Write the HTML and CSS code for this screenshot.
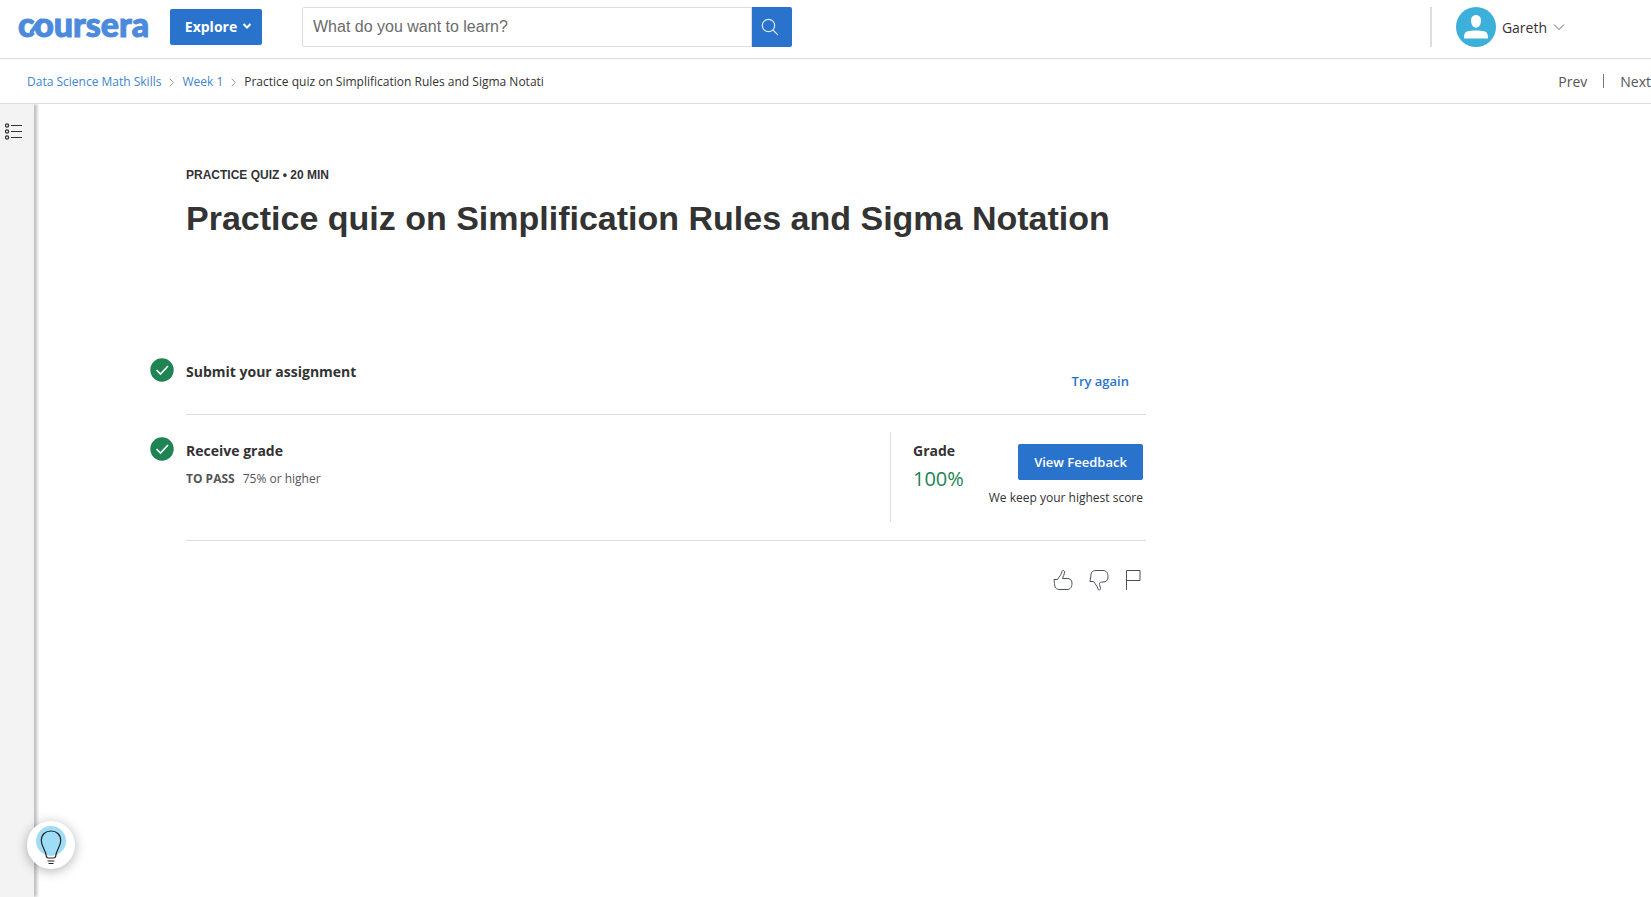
FILE: index.html
```
<!DOCTYPE html>
<html lang="en">
<head>
<meta charset="utf-8">
<meta name="viewport" content="width=device-width, initial-scale=1">
<title>Practice quiz on Simplification Rules and Sigma Notation | Coursera</title>
<link rel="stylesheet" href="styles.css">
</head>
<body>
<header class="topbar">
  <a class="logo" href="#">coursera
    <svg class="logo-link" width="12" height="18" viewBox="0 0 12 18" fill="none" stroke="currentColor" stroke-width="4" aria-hidden="true"><path d="M0 15.500C4.500 14 6 5 12 3"/></svg>
  </a>
  <button class="explore" type="button">Explore
    <svg width="10" height="8" viewBox="0 0 10 8" fill="none" stroke="currentColor" stroke-width="2" aria-hidden="true"><path d="M1.500 2 5 5.500 8.500 2"/></svg>
  </button>
  <form class="search" role="search">
    <input class="search-input" type="text" placeholder="What do you want to learn?" aria-label="What do you want to learn?">
    <button class="search-button" type="button" aria-label="Search">
      <svg width="18" height="18" viewBox="0 0 18 18" fill="none" stroke="currentColor" stroke-width="1.200" aria-hidden="true"><circle cx="7.500" cy="7.500" r="6.200"/><path d="M12 12l4.800 4.800"/></svg>
    </button>
  </form>
  <button class="account" type="button">
    <svg class="avatar" width="40" height="40" viewBox="0 0 40 40" aria-hidden="true"><circle cx="20" cy="20" r="20" fill="#3dafdb"/><path d="M20 8c3 0 5 2.200 5 5.600 0 3.800-2.100 7.200-5 7.200s-5-3.400-5-7.200C15 10.200 17 8 20 8z" fill="#fff"/><path d="M8 31.500c0-5 1-6.500 4-7.200 2.500-.6 4-.8 8-.8s5.500.2 8 .8c3 .7 4 2.200 4 7.200z" fill="#fff"/></svg>
    <span>Gareth</span>
    <svg width="12" height="8" viewBox="0 0 12 8" fill="none" stroke="#666" aria-hidden="true"><path d="M1 1.500l5 5 5-5"/></svg>
  </button>
</header>
<div class="subbar">
  <nav class="crumbs" aria-label="Breadcrumb">
    <a href="#">Data Science Math Skills</a>
    <svg width="5" height="9" viewBox="0 0 5 9" fill="none" stroke="#999" aria-hidden="true"><path d="M.7.700l3.600 3.800L.7 8.300"/></svg>
    <a href="#">Week 1</a>
    <svg width="5" height="9" viewBox="0 0 5 9" fill="none" stroke="#999" aria-hidden="true"><path d="M.7.700l3.600 3.800L.7 8.300"/></svg>
    <span>Practice quiz on Simplification Rules and Sigma Notati</span>
  </nav>
  <nav class="pager" aria-label="Items">
    <a href="#">Prev</a><span class="pager-line"></span><a href="#">Next</a>
  </nav>
</div>
<div class="workspace">
  <aside class="rail">
    <button class="icon-button" type="button" aria-label="Show course outline">
      <svg width="18" height="17" viewBox="0 0 18 17" fill="none" stroke="#333" aria-hidden="true"><g stroke-width="1.300"><circle cx="2" cy="2.500" r="1.600"/><circle cx="2" cy="8.500" r="1.600"/><circle cx="2" cy="14.500" r="1.600"/></g><path d="M6 2.500h11M6 8.500h11M6 14.500h11"/></svg>
    </button>
  </aside>
  <main class="content">
    <p class="eyebrow">PRACTICE QUIZ • 20 MIN</p>
    <h1 class="title">Practice quiz on Simplification Rules and Sigma Notation</h1>
    <section class="step step-submit">
      <svg class="check" width="24" height="24" viewBox="0 0 24 24" fill="none" aria-hidden="true"><circle cx="12" cy="12" r="11.700" fill="#1f8354"/><path d="M6.500 12l4 4 7.500-8" stroke="#fff" stroke-width="1.600"/></svg>
      <h2 class="step-title">Submit your assignment</h2>
      <button class="try-again" type="button">Try again</button>
    </section>
    <section class="step step-grade">
      <svg class="check" width="24" height="24" viewBox="0 0 24 24" fill="none" aria-hidden="true"><circle cx="12" cy="12" r="11.700" fill="#1f8354"/><path d="M6.500 12l4 4 7.500-8" stroke="#fff" stroke-width="1.600"/></svg>
      <div class="receive">
        <h2 class="step-title">Receive grade</h2>
        <p class="pass"><span class="pass-label">TO PASS</span><span>75% or higher</span></p>
      </div>
      <div class="result">
        <div class="grade">
          <h2 class="step-title">Grade</h2>
          <p class="score">100%</p>
        </div>
        <div class="feedback">
          <button class="view-feedback" type="button">View Feedback</button>
          <p class="keep">We keep your highest score</p>
        </div>
      </div>
    </section>
    <div class="reactions">
      <button class="icon-button" type="button" aria-label="Like">
        <svg width="20" height="22" viewBox="0 0 20 22" fill="none" stroke="#4a4f5a" aria-hidden="true"><path d="M1 10.500h3.500C6 7.500 8.500 6 9 2.500c.2-1.500 2.500-1.500 2.500.5 0 2.500-1.500 4.500-2 6.500h4.500c3 0 5 1.500 5 4.500 0 4-1.500 6.500-5 6.500H7c-4 0-5.500-2-5.500-6 0-1.500-.5-3-.5-4z"/></svg>
      </button>
      <button class="icon-button" type="button" aria-label="Dislike">
        <svg width="20" height="22" viewBox="0 0 20 22" fill="none" stroke="#4a4f5a" aria-hidden="true"><path d="M1 12.500h3.500c1.500 2.500 4 4.500 4.500 7.500.5 1.500 2.500 1.200 2.500-.5 0-2-1.500-3.500-1-5 .2-1.200 1.500-1.500 3.500-1.500 3 0 5-1.500 5-5 0-4-1.500-6.500-5-6.500H7C3 1.500 2 3.500 1.800 7.500 1.700 9 1 11 1 12.500z"/></svg>
      </button>
      <button class="icon-button" type="button" aria-label="Report a problem">
        <svg width="16" height="22" viewBox="0 0 16 22" fill="none" stroke="#4a4f5a" aria-hidden="true"><path d="M1.500 21V1.500h13.500v10H1.500"/></svg>
      </button>
    </div>
  </main>
</div>
<button class="help" type="button" aria-label="Help">
  <svg width="30" height="42" viewBox="0 0 30 42" fill="none" stroke="#222" aria-hidden="true"><circle cx="15" cy="17" r="15" fill="#9fddf6" stroke="none"/><path d="M10.500 33c-.8-8-5.200-10-5.200-16.500C5.300 10.500 9.500 7 15 7s9.700 3.500 9.700 9.500C24.700 23 20.300 25 19.500 33M10.500 32q0 2 1.500 2h6q1.500 0 1.500-2M11.500 37h7M12.500 39.500h5" stroke-width="1.200"/></svg>
</button>
</body>
</html>
```
FILE: styles.css
```
* { box-sizing: border-box; }
html, body { height: 100%; }
body {
  margin: 0;
  display: flex;
  flex-direction: column;
  overflow: hidden;
  background: #fff;
  color: #333;
  font-family: "Open Sans", sans-serif;
  font-size: 12px;
}
h1, h2, p { margin: 0; }
a { text-decoration: none; }
button { margin: 0; padding: 0; border: 0; background: none; font-family: inherit; color: inherit; cursor: pointer; }
svg { display: block; flex: none; }

.topbar {
  display: flex;
  align-items: flex-start;
  flex: none;
  height: 59px;
  padding: 7px 86px 0 18px;
  border-bottom: 1px solid #ddd;
}
.logo {
  position: relative;
  width: 128px;
  font-family: Lato, sans-serif;
  font-weight: 900;
  font-size: 34px;
  line-height: 34px;
  color: #4b8add;
  -webkit-text-stroke: 1px #4b8add;
}
.logo-link { position: absolute; left: 12px; top: 10px; }
.explore {
  display: flex;
  align-items: center;
  justify-content: center;
  gap: 5px;
  width: 92px;
  height: 36px;
  margin: 2px 40px 0 24px;
  padding: 0 0 2px 5px;
  border-radius: 2px;
  background: #2a73cc;
  color: #fff;
  font-size: 14px;
  font-weight: 700;
}
.search { display: flex; width: 490px; height: 40px; }
.search-input {
  flex: 1;
  min-width: 0;
  padding: 0 10px;
  border: 1px solid #ddd;
  border-radius: 2px 0 0 2px;
  font-family: "Liberation Sans", Arial, sans-serif;
  font-size: 16px;
  color: #333;
}
.search-input::placeholder { color: #6b6b6b; opacity: 1; }
.search-button { display: flex; align-items: center; width: 40px; padding-left: 9px; background: #2a73cc; color: #dce8f7; border-radius: 0 2px 2px 0; }
.account {
  display: flex;
  align-items: center;
  gap: 6px;
  height: 40px;
  margin-left: auto;
  padding-left: 24px;
  border-left: 2px solid #ddd;
  font-size: 14px;
}

.subbar {
  display: flex;
  align-items: center;
  justify-content: space-between;
  flex: none;
  height: 45px;
  padding-left: 27px;
  border-bottom: 1px solid #ddd;
}
.crumbs { display: flex; align-items: center; gap: 8px; padding-top: 2px; line-height: 18px; }
.crumbs a { color: #3d86d0; }
.pager { display: flex; align-items: center; gap: 16px; font-size: 14px; }
.pager a { color: #555; }
.pager-line { width: 1px; height: 14px; background: #777; }

.workspace { display: flex; flex: 1; min-height: 0; }
.rail { flex: none; width: 34px; padding: 19px 0 0 5px; background: #f3f3f3; box-shadow: 3px 0 3px rgba(0, 0, 0, 0.25); clip-path: inset(0 -8px 0 0); }
.content { flex: 1; max-width: 1112px; padding: 62px 0 0 152px; }
.eyebrow { font-family: "Liberation Sans", Arial, sans-serif; font-weight: 700; font-size: 12px; line-height: 18px; }
.title { margin-top: 12px; font-family: "Liberation Sans", Arial, sans-serif; font-size: 34px; line-height: 44px; }

.step { display: flex; border-bottom: 1px solid #ddd; }
.step-title { font-size: 14px; line-height: 20px; font-weight: 700; }
.check { margin: 0 12px 0 -36px; }
.step-submit { align-items: flex-start; margin-top: 118px; height: 57px; }
.step-submit .step-title { margin-top: 4px; }
.try-again { margin: 14px 17px 0 auto; font-size: 13px; line-height: 18px; font-weight: 600; color: #2a73cc; }
.step-grade { height: 126px; padding: 17px 0 18px; }
.step-grade .check { margin-top: 5px; }
.receive { flex: 1; padding-top: 9px; }
.pass { display: flex; gap: 8px; margin-top: 9px; line-height: 18px; color: #555; }
.pass-label { font-weight: 700; }
.result { display: flex; justify-content: space-between; width: 256px; padding: 9px 3px 0 22px; border-left: 1px solid #ddd; }
.score { margin-top: 4px; font-size: 20px; line-height: 28px; color: #1f8354; }
.feedback { display: flex; flex-direction: column; align-items: flex-end; margin-top: 3px; }
.view-feedback { width: 125px; height: 36px; border-radius: 2px; background: #2a73cc; color: #fff; font-size: 13px; font-weight: 600; }
.keep { margin-top: 9px; line-height: 18px; white-space: nowrap; }
.reactions { display: flex; justify-content: flex-end; gap: 16px; margin-top: 28px; padding-right: 5px; }

.help {
  position: fixed;
  left: 27px;
  bottom: 28px;
  display: grid;
  place-items: center;
  width: 48px;
  height: 48px;
  border-radius: 50%;
  background: #fff;
  box-shadow: 0 2px 12px rgba(0, 0, 0, 0.3);
}
```
